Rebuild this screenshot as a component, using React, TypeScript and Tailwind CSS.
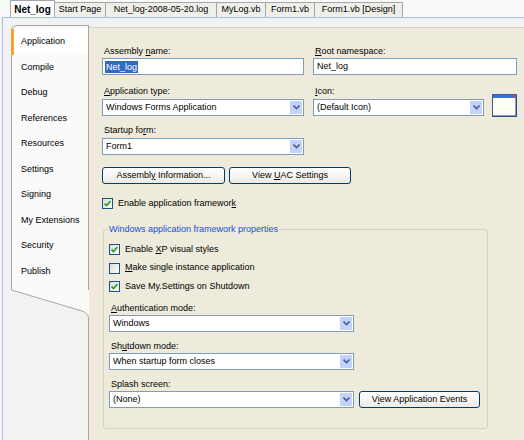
import React from "react";

const docTabs = [
  { label: "Net_log", active: true, w: "w-[45px]" },
  { label: "Start Page", w: "w-[52px]" },
  { label: "Net_log-2008-05-20.log", w: "w-[112px]" },
  { label: "MyLog.vb", w: "w-[50px]" },
  { label: "Form1.vb", w: "w-[50px]" },
  { label: "Form1.vb [Design]", w: "w-[89px]" },
];

const pageTabs = [
  "Application",
  "Compile",
  "Debug",
  "References",
  "Resources",
  "Settings",
  "Signing",
  "My Extensions",
  "Security",
  "Publish",
];

// access key underline, like the WinForms labels
const K = ({ children }: { children: React.ReactNode }) => (
  <span className="underline underline-offset-[1px]">{children}</span>
);

const Label = ({ children }: { children: React.ReactNode }) => (
  <div className="h-[13px] leading-[13px] pl-[2px] whitespace-nowrap">{children}</div>
);

const TextBox = ({ value, selected, className }: { value: string; selected?: boolean; className?: string }) => (
  <div className={`h-[17px] border border-[#7f9db9] bg-white flex items-center pl-[2px] ${className ?? ""}`}>
    <span className={selected ? "bg-[#316ac5] text-white px-[1px] leading-[12px]" : "px-[1px]"}>{value}</span>
  </div>
);

const ComboBox = ({ value, className }: { value: string; className?: string }) => (
  <div className={`h-[17px] border border-[#7f9db9] bg-white flex items-center ${className ?? ""}`}>
    <span className="flex-1 pl-[3px] whitespace-nowrap overflow-hidden">{value}</span>
    <div className="w-[14px] h-[15px] bg-[#c3d3fd] border border-white flex items-center justify-center">
      <svg width="7" height="5" viewBox="0 0 7 5">
        <path d="M0.5 0.5 L3.5 3.5 L6.5 0.5" fill="none" stroke="#4d6185" strokeWidth="1.6" />
      </svg>
    </div>
  </div>
);

const Button = ({ children, className }: { children: React.ReactNode; className?: string }) => (
  <div
    className={`h-[17px] border border-[#003c74] rounded-[3px] bg-gradient-to-b from-white to-[#ecebe6] flex items-center justify-center whitespace-nowrap ${className ?? ""}`}
  >
    <span>{children}</span>
  </div>
);

const CheckBox = ({ checked, children }: { checked?: boolean; children: React.ReactNode }) => (
  <div className="h-[13px] flex items-center gap-[5px]">
    <div className="w-[11px] h-[11px] border border-[#1c5180] bg-gradient-to-br from-[#dcdcd7] to-white flex items-center justify-center">
      {checked && (
        <svg width="7" height="7" viewBox="0 0 7 7">
          <path d="M0.5 3.5 L2.5 5.5 L6.5 1" fill="none" stroke="#21a121" strokeWidth="1.7" />
        </svg>
      )}
    </div>
    <span className="whitespace-nowrap">{children}</span>
  </div>
);

const IconPreview = () => (
  <svg width="25" height="23" viewBox="0 0 25 23">
    <rect x="0.5" y="0.5" width="24" height="22" fill="#fffff4" stroke="#355a9c" />
    <rect x="1" y="1" width="23" height="3" fill="#3a6fd8" />
    <rect x="21" y="1" width="2" height="2" fill="#e04030" />
    <path d="M1 22 H24 V4" fill="none" stroke="#1e3f7a" />
  </svg>
);

export default function App() {
  return (
    <div className="w-[524px] h-[440px] overflow-hidden flex flex-col bg-[#f3f3f3] text-black font-['Liberation_Sans',Arial,sans-serif] text-[9px]">
      {/* document tabs */}
      <div className="h-[17px] flex items-end pl-[10px] bg-[#f9f9f7]">
        {docTabs.map((t) => (
          <div
            key={t.label}
            className={`${t.w} flex items-center justify-center border border-b-0 border-[#a2a7ad] whitespace-nowrap ${
              t.active
                ? "h-[17px] bg-white font-bold text-[10px] -mr-[1px]"
                : "h-[15px] bg-[#efefe9] -mr-[1px]"
            }`}
          >
            {t.label}
          </div>
        ))}
      </div>

      {/* document frame */}
      <div className="flex-1 ml-[2px] border-l border-t border-[#a9bde6] flex bg-[#f2f2f2]">
        {/* property page tabs */}
        <div className="ml-[8px] mt-[7px] w-[78px] flex flex-col">
          <div className="border-l border-t border-r border-[#a6a6a6] rounded-tl-[6px] bg-[#fafafa] pt-[3px] pb-[6px]">
            {pageTabs.map((t, i) => (
              <div
                key={t}
                className={`h-[25.5px] flex items-center ${
                  i === 0
                    ? "-ml-[1px] border-l-[3px] border-[#f3a531] bg-white pl-[7px]"
                    : "pl-[9px]"
                }`}
              >
                {t}
              </div>
            ))}
          </div>
          <svg width="78" height="30" viewBox="0 0 78 30" className="block">
            <path d="M0 0 H78 V30 H77.5 V28 Q77 23 71 21 L0.5 0 Z" fill="#fafafa" />
            <path d="M0.5 0 L71 21 Q77 23 77.5 28 V30" fill="none" stroke="#a6a6a6" />
          </svg>
          <div className="flex-1 border-r border-[#a6a6a6]" />
        </div>

        {/* page content */}
        <div className="flex-1 mt-[9px] border-t border-[#d6d3c6] bg-[#efebdc] pl-[13px] pt-[17px]">
          <div className="flex gap-[9px]">
            <div className="w-[202px]">
              <Label>
                Assembly <K>n</K>ame:
              </Label>
              <TextBox value="Net_log" selected />
            </div>
            <div className="w-[204px]">
              <Label>
                <K>R</K>oot namespace:
              </Label>
              <TextBox value="Net_log" />
            </div>
          </div>

          <div className="flex gap-[9px] mt-[10px]">
            <div className="w-[202px]">
              <Label>
                <K>A</K>pplication type:
              </Label>
              <ComboBox value="Windows Forms Application" className="mt-[1px]" />
            </div>
            <div className="w-[204px] flex items-end gap-[8px]">
              <div className="w-[171px]">
                <Label>
                  <K>I</K>con:
                </Label>
                <ComboBox value="(Default Icon)" className="mt-[1px]" />
              </div>
              <div className="mb-[-1px]">
                <IconPreview />
              </div>
            </div>
          </div>

          <div className="w-[202px] mt-[8px]">
            <Label>
              Startup fo<K>r</K>m:
            </Label>
            <ComboBox value="Form1" className="mt-[1px]" />
          </div>

          <div className="flex gap-[4px] mt-[12px]">
            <Button className="w-[123px]">
              Assembl<K>y</K> Information...
            </Button>
            <Button className="w-[122px]">
              View <K>U</K>AC Settings
            </Button>
          </div>

          <div className="mt-[13px]">
            <CheckBox checked>
              Enable application framewor<K>k</K>
            </CheckBox>
          </div>

          <fieldset className="mt-[13px] ml-[1px] w-[385px] h-[206px] border border-[#d3d0bd] rounded-[3px] pl-[5px]">
            <legend className="-ml-[1px] px-[1px] leading-[12px] text-[#1450d2]">
              Windows application framework properties
            </legend>
            <div className="mt-[8px] flex flex-col gap-[5.5px]">
              <CheckBox checked>
                Enable <K>X</K>P visual styles
              </CheckBox>
              <CheckBox>
                <K>M</K>ake single instance application
              </CheckBox>
              <CheckBox checked>Save My.Settings on Shutdown</CheckBox>
            </div>

            <div className="mt-[9px] w-[245px]">
              <Label>
                <K>A</K>uthentication mode:
              </Label>
              <ComboBox value="Windows" />
            </div>
            <div className="mt-[8px] w-[245px]">
              <Label>
                Sh<K>u</K>tdown mode:
              </Label>
              <ComboBox value="When startup form closes" />
            </div>
            <div className="mt-[8px] flex items-end gap-[5px]">
              <div className="w-[245px]">
                <Label>Splash screen:</Label>
                <ComboBox value="(None)" />
              </div>
              <Button className="w-[121px]">
                V<K>i</K>ew Application Events
              </Button>
            </div>
          </fieldset>
        </div>
      </div>
    </div>
  );
}
